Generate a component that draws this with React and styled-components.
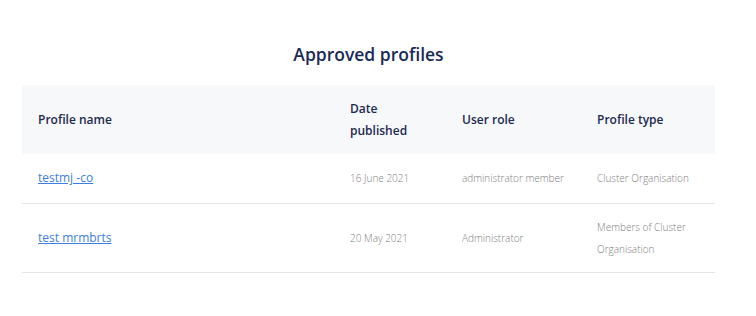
import React from "react";
import styled, { createGlobalStyle } from "styled-components";

const Global = createGlobalStyle`
  html, body { margin: 0; padding: 0; background: #fff; }
  body { font-family: "Open Sans", "Noto Sans", sans-serif; }
  *, *::before, *::after { box-sizing: border-box; }
`;

const Page = styled.div`
  width: 693px;
  margin-left: 22px;
  padding-top: 42px;
`;

const Title = styled.h2`
  margin: 0 0 19px;
  text-align: center;
  font-size: 17.5px;
  line-height: 24px;
  font-weight: 600;
  color: #182a57;
`;

const Table = styled.table`
  width: 693px;
  border-collapse: collapse;
  table-layout: fixed;
`;

const Col = styled.col`
  width: ${(p) => p.$w}px;
`;

const HeadRow = styled.tr`
  background: #f7f8fa;
  height: 69px;
`;

const Th = styled.th`
  text-align: left;
  padding: 0 16px;
  font-size: 12px;
  line-height: 22px;
  font-weight: 600;
  color: #1c2a4e;
`;

const Row = styled.tr`
  height: ${(p) => p.$h}px;
  border-bottom: 1px solid #e3e3e3;
`;

const Td = styled.td`
  padding: 0 16px;
  font-size: 10px;
  line-height: 22px;
  font-weight: 300;
  color: #808080;
`;

const Link = styled.a`
  font-size: 12px;
  font-weight: 400;
  color: #3d7ede;
  text-decoration: underline;
`;

const rows = [
  { name: "testmj -co", date: "16 June 2021", role: "administrator member", type: "Cluster Organisation", h: 49 },
  { name: "test mrmbrts", date: "20 May 2021", role: "Administrator", type: "Members of Cluster Organisation", h: 69 },
];

export default function App() {
  return (
    <>
      <Global />
      <Page>
        <Title>Approved profiles</Title>
        <Table>
          <colgroup>
            <Col $w={312} />
            <Col $w={112} />
            <Col $w={135} />
            <Col $w={134} />
          </colgroup>
          <thead>
            <HeadRow>
              <Th>Profile name</Th>
              <Th>Date published</Th>
              <Th>User role</Th>
              <Th>Profile type</Th>
            </HeadRow>
          </thead>
          <tbody>
            {rows.map((r) => (
              <Row key={r.name} $h={r.h}>
                <Td><Link href="#">{r.name}</Link></Td>
                <Td>{r.date}</Td>
                <Td>{r.role}</Td>
                <Td>{r.type}</Td>
              </Row>
            ))}
          </tbody>
        </Table>
      </Page>
    </>
  );
}
